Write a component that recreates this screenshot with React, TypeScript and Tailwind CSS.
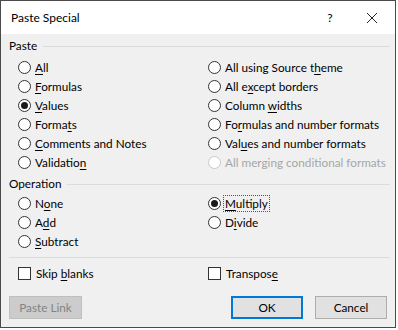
import React from "react";

type Opt = { pre: string; key?: string; post?: string; checked?: boolean; disabled?: boolean; focus?: boolean };

function Label({ o }: { o: Opt }) {
    return (
        <span className="whitespace-nowrap">
            {o.pre}
            {o.key && <u className="underline decoration-1 underline-offset-[2px]">{o.key}</u>}
            {o.post}
        </span>
    );
}

function Radio({ o }: { o: Opt }) {
    return (
        <div className={`h-[19px] flex items-center gap-[4px] ${o.disabled ? "text-[#a6a6a6]" : "text-black"}`}>
            <span
                className={`w-[13px] h-[13px] rounded-full border bg-white flex items-center justify-center shrink-0 ${o.disabled ? "border-[#c8c8c8]" : "border-[#333333]"}`}
            >
                {o.checked && <span className="w-[7px] h-[7px] rounded-full bg-[#1a1a1a]" />}
            </span>
            {o.focus ? (
                <span className="border border-dotted border-[#555] leading-[15px] px-[1px] -ml-[2px]">
                    <Label o={o} />
                </span>
            ) : (
                <Label o={o} />
            )}
        </div>
    );
}

function Check({ o }: { o: Opt }) {
    return (
        <div className="h-[19px] flex items-center gap-[5px]">
            <span className="w-[13px] h-[13px] border border-[#333333] bg-white shrink-0" />
            <Label o={o} />
        </div>
    );
}

function GroupHeader({ title }: { title: string }) {
    return (
        <div className="h-[18px] flex items-center gap-[6px] pl-[8px] pr-[5px]">
            <span>{title}</span>
            <span className="flex-1 h-px bg-[#dcdcdc]" />
        </div>
    );
}

const pasteLeft: Opt[] = [
    { pre: "", key: "A", post: "ll" },
    { pre: "", key: "F", post: "ormulas" },
    { pre: "", key: "V", post: "alues", checked: true },
    { pre: "Forma", key: "t", post: "s" },
    { pre: "", key: "C", post: "omments and Notes" },
    { pre: "Validatio", key: "n", post: "" },
];

const pasteRight: Opt[] = [
    { pre: "All using Source t", key: "h", post: "eme" },
    { pre: "All e", key: "x", post: "cept borders" },
    { pre: "Column ", key: "w", post: "idths" },
    { pre: "Fo", key: "r", post: "mulas and number formats" },
    { pre: "Val", key: "u", post: "es and number formats" },
    { pre: "All merging conditional formats", disabled: true },
];

const opLeft: Opt[] = [
    { pre: "N", key: "o", post: "ne" },
    { pre: "A", key: "d", post: "d" },
    { pre: "", key: "S", post: "ubtract" },
];

const opRight: Opt[] = [
    { pre: "", key: "M", post: "ultiply", checked: true, focus: true },
    { pre: "D", key: "i", post: "vide" },
];

export default function App() {
    return (
        <div className="w-[398px] h-[330px] bg-white font-['Lato',sans-serif] text-[11.75px] text-black">
            <div className="w-[396px] h-[328px] border border-[#4a4a4a] bg-[#f0f0f0] flex flex-col">
                {/* Title bar */}
                <div className="h-[33px] bg-white flex items-center pl-[10px] shrink-0">
                    <span className="flex-1 text-[12px]">Paste Special</span>
                    <span className="w-[20px] text-center mr-[26px] text-[12px]">?</span>
                    <svg width="12" height="12" viewBox="0 0 12 12" className="mr-[17px]">
                        <path d="M1 1L11 11M11 1L1 11" stroke="#222" strokeWidth="1" />
                    </svg>
                </div>

                <div className="mt-[3px]">
                    <GroupHeader title="Paste" />
                </div>
                <div className="mt-[3px] grid grid-cols-[190px_1fr] pl-[17px]">
                    <div className="flex flex-col">
                        {pasteLeft.map((o, i) => (
                            <Radio key={i} o={o} />
                        ))}
                    </div>
                    <div className="flex flex-col">
                        {pasteRight.map((o, i) => (
                            <Radio key={i} o={o} />
                        ))}
                    </div>
                </div>

                <div className="mt-[3px]">
                    <GroupHeader title="Operation" />
                </div>
                <div className="mt-[1px] grid grid-cols-[190px_1fr] pl-[17px]">
                    <div className="flex flex-col">
                        {opLeft.map((o, i) => (
                            <Radio key={i} o={o} />
                        ))}
                    </div>
                    <div className="flex flex-col">
                        {opRight.map((o, i) => (
                            <Radio key={i} o={o} />
                        ))}
                    </div>
                </div>

                <div className="mt-[6px] mx-[8px] mr-[5px] h-px bg-[#dcdcdc]" />

                <div className="mt-[6px] grid grid-cols-[190px_1fr] pl-[17px]">
                    <Check o={{ pre: "Skip ", key: "b", post: "lanks" }} />
                    <Check o={{ pre: "Transpos", key: "e", post: "" }} />
                </div>

                <div className="mt-[13px] flex items-center px-[8px]">
                    <button className="w-[73px] h-[23px] bg-[#cccccc] border border-[#bfbfbf] text-[#838383]">
                        Paste Link
                    </button>
                    <div className="flex-1" />
                    <button className="w-[72px] h-[23px] bg-[#e1e1e1] border-2 border-[#0078d7]">OK</button>
                    <button className="w-[72px] h-[23px] ml-[12px] bg-[#e1e1e1] border border-[#adadad]">
                        Cancel
                    </button>
                </div>
            </div>
        </div>
    );
}
